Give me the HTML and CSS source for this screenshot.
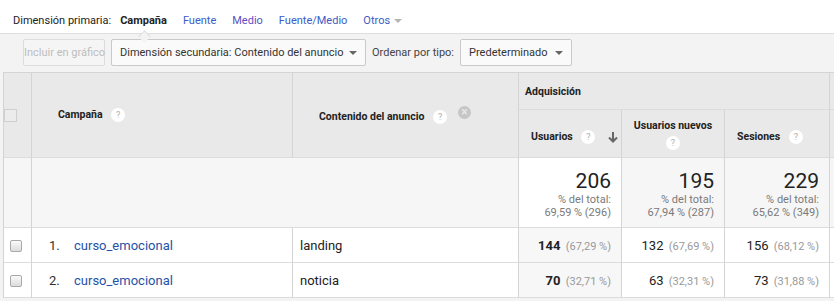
FILE: index.html
```html
<!DOCTYPE html>
<html>

<head>
    <title>Informe de campañas</title>
    <link rel="stylesheet" href="styles.css">
</head>

<body>
    <div class="primary">
        <span class="primary-label">Dimensión primaria:</span>
        <span class="dim current">Campaña</span>
        <a class="dim" href="#">Fuente</a>
        <a class="dim visited" href="#">Medio</a>
        <a class="dim" href="#">Fuente/Medio</a>
        <a class="dim" href="#">Otros <span class="caret light"></span></a>
    </div>

    <div class="toolbar">
        <button class="btn" disabled>Incluir en gráfico</button>
        <div class="select secondary">Dimensión secundaria: Contenido del anuncio <span class="caret"></span></div>
        <span class="sort-label">Ordenar por tipo:</span>
        <div class="select sort">Predeterminado <span class="caret"></span></div>
    </div>

    <div class="grid-wrap">
        <table class="grid">
            <colgroup>
                <col style="width: 28px">
                <col style="width: 261px">
                <col style="width: 226px">
                <col style="width: 103px">
                <col style="width: 103px">
                <col style="width: 105px">
                <col style="width: 100px">
            </colgroup>
            <thead>
                <tr class="head-top">
                    <th class="check-cell" rowspan="2"><span class="head-box"></span></th>
                    <th class="dim-head" rowspan="2">Campaña <span class="help">?</span></th>
                    <th class="dim-head" rowspan="2">Contenido del anuncio <span class="help">?</span><span class="remove">&times;</span></th>
                    <th class="group" colspan="3">Adquisición</th>
                    <th class="group"></th>
                </tr>
                <tr class="head-sub">
                    <th class="metric low">Usuarios <span class="help">?</span><svg class="sort-arrow" width="10" height="12" viewBox="0 0 10 12">
                            <path d="M5 1v9M1 6.5l4 4 4-4" fill="none" stroke="#666" stroke-width="2"/>
                        </svg></th>
                    <th class="metric center">Usuarios nuevos<br><span class="help">?</span></th>
                    <th class="metric low">Sesiones <span class="help">?</span></th>
                    <th class="metric"></th>
                </tr>
            </thead>
            <tbody>
                <tr class="totals">
                    <td class="check-cell"></td>
                    <td colspan="2"></td>
                    <td class="num sorted">
                        <div class="big">206</div>
                        <div class="sub">% del total:</div>
                        <div class="sub">69,59 % (296)</div>
                    </td>
                    <td class="num">
                        <div class="big">195</div>
                        <div class="sub">% del total:</div>
                        <div class="sub">67,94 % (287)</div>
                    </td>
                    <td class="num">
                        <div class="big">229</div>
                        <div class="sub">% del total:</div>
                        <div class="sub">65,62 % (349)</div>
                    </td>
                    <td></td>
                </tr>
                <tr class="row">
                    <td class="check-cell"><span class="box"></span></td>
                    <td><span class="idx">1.</span><a class="link" href="#">curso_emocional</a></td>
                    <td class="text">landing</td>
                    <td class="num sorted"><b>144</b> <span class="pct">(67,29 %)</span></td>
                    <td class="num">132 <span class="pct">(67,69 %)</span></td>
                    <td class="num">156 <span class="pct">(68,12 %)</span></td>
                    <td></td>
                </tr>
                <tr class="row">
                    <td class="check-cell"><span class="box"></span></td>
                    <td><span class="idx">2.</span><a class="link" href="#">curso_emocional</a></td>
                    <td class="text">noticia</td>
                    <td class="num sorted"><b>70</b> <span class="pct">(32,71 %)</span></td>
                    <td class="num">63 <span class="pct">(32,31 %)</span></td>
                    <td class="num">73 <span class="pct">(31,88 %)</span></td>
                    <td></td>
                </tr>
            </tbody>
        </table>
    </div>
</body>

</html>
```

FILE: styles.css
```css
body {
    margin: 0;
    font-family: Roboto, "Liberation Sans", Arial, sans-serif;
    color: #222;
    background-color: #f3f3f3;
    overflow: hidden;
}

a {
    text-decoration: none;
}

.primary {
    position: relative;
    display: flex;
    align-items: center;
    height: 34px;
    padding: 7px 0 0 13px;
    font-size: 11px;
    background-color: #fff;
    border-bottom: 1px solid #dedede;
    box-sizing: border-box;
    white-space: nowrap;
}

.primary-label {
    margin-right: 9px;
}

.dim {
    margin-right: 16px;
    color: #3b5bc6;
}

.dim.visited {
    color: #5b4fc0;
}

.dim.current {
    position: relative;
    color: #222;
    font-weight: bold;
}

/* little notch under the selected dimension */
.dim.current::after {
    content: "";
    position: absolute;
    left: 20px;
    bottom: -14px;
    width: 8px;
    height: 8px;
    background-color: #f3f3f3;
    border-top: 1px solid #dedede;
    border-left: 1px solid #dedede;
    transform: rotate(45deg);
}

.caret {
    display: inline-block;
    width: 0;
    height: 0;
    margin-left: 4px;
    vertical-align: middle;
    border-left: 4px solid transparent;
    border-right: 4px solid transparent;
    border-top: 4px solid #666;
}

.caret.light {
    border-top-color: #b5b5b5;
    margin-left: 1px;
}

.toolbar {
    display: flex;
    align-items: center;
    gap: 6px;
    height: 37px;
    padding: 0 0 1px 23px;
    font-size: 11px;
    white-space: nowrap;
}

.btn {
    height: 27px;
    width: 82px;
    padding: 0;
    font-family: inherit;
    font-size: 11px;
    white-space: nowrap;
    color: #bdbdbd;
    background-color: #f5f5f5;
    border: 1px solid #dcdcdc;
    border-radius: 2px;
}

.select {
    display: flex;
    align-items: center;
    justify-content: space-between;
    height: 27px;
    padding: 0 8px 0 8px;
    color: #333;
    background-color: #fafafa;
    border: 1px solid #c9c9c9;
    border-radius: 2px;
    box-sizing: border-box;
}

.select.secondary {
    width: 255px;
}

.select.sort {
    width: 112px;
}

.sort-label {
    color: #444;
}

.grid-wrap {
    padding-left: 3px;
    overflow: hidden;
}

.grid {
    table-layout: fixed;
    width: 926px;
    border-spacing: 0;
    border-top: 1px solid #d4d4d4;
    border-left: 1px solid #d4d4d4;
    font-size: 13px;
}

.grid th,
.grid td {
    padding: 0;
    border-right: 1px solid #d4d4d4;
    border-bottom: 1px solid #dcdcdc;
    box-sizing: border-box;
}

.grid th {
    font-size: 10.5px;
    font-weight: bold;
    text-align: left;
    white-space: nowrap;
    background-color: #e9e9e9;
    color: #222;
}

.head-top {
    height: 37px;
}

.head-sub {
    height: 48px;
}

.check-cell {
    text-align: center;
}

.head-box {
    display: inline-block;
    width: 13px;
    height: 13px;
    vertical-align: middle;
    border: 1px solid #cfcfcf;
    background-color: #ececec;
    box-sizing: border-box;
}

.grid th.dim-head {
    padding-left: 26px;
}

.grid th.group {
    padding-left: 6px;
}

.grid th.metric {
    padding-left: 12px;
}

.grid th.metric.low {
    padding-top: 7px;
}

.grid th.metric.center {
    padding-left: 0;
    text-align: center;
    line-height: 17px;
}

.help {
    display: inline-block;
    width: 14px;
    height: 14px;
    margin-left: 6px;
    line-height: 14px;
    text-align: center;
    vertical-align: middle;
    font-size: 9px;
    font-weight: normal;
    color: #b0b0b0;
    background-color: #fff;
    border-radius: 50%;
}

.center .help {
    margin-left: 0;
}

.remove {
    display: inline-block;
    width: 13px;
    height: 13px;
    margin-left: 11px;
    line-height: 12px;
    text-align: center;
    vertical-align: 4px;
    font-size: 12px;
    font-weight: bold;
    color: #e6e6e6;
    background-color: #c6c6c6;
    border-radius: 50%;
}

.sort-arrow {
    margin-left: 13px;
    vertical-align: middle;
}

.totals {
    height: 70px;
}

.totals td {
    background-color: #f6f6f6;
}

.grid td.sorted {
    background-color: #f7f7f7;
}

.totals td.sorted {
    background-color: #fff;
}

.num {
    text-align: right;
    padding-right: 10px !important;
}

.big {
    font-size: 21px;
    line-height: 24px;
    color: #222;
    margin-top: 2px;
}

.sub {
    font-size: 11px;
    line-height: 13px;
    color: #7a7a7a;
}

.row {
    height: 35px;
}

.row td {
    background-color: #fff;
}

.row .check-cell {
    text-align: left;
    padding-left: 6px;
}

.box {
    display: inline-block;
    width: 12px;
    height: 12px;
    vertical-align: middle;
    border: 1px solid #a9a9a9;
    border-radius: 2px;
    background: linear-gradient(#fafafa, #dcdcdc);
    box-sizing: border-box;
}

.idx {
    display: inline-block;
    width: 25px;
    padding-left: 17px;
    color: #333;
}

.link {
    color: #2552a8;
}

.text {
    padding-left: 7px !important;
}

.pct {
    font-size: 11px;
    color: #999;
    margin-left: 2px;
}
```
